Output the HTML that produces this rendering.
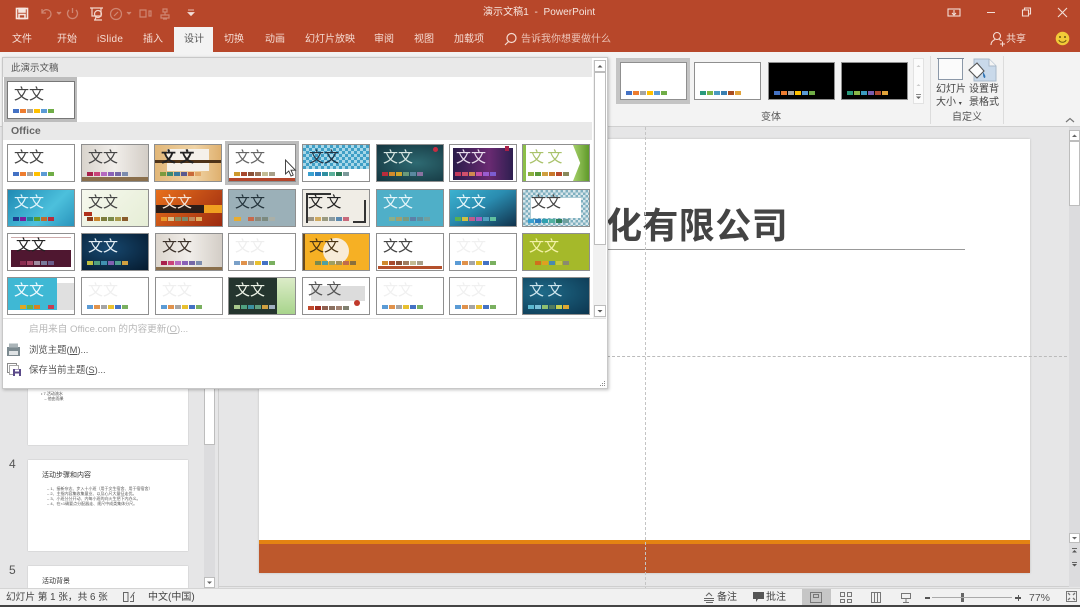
<!DOCTYPE html>
<html lang="zh"><head><meta charset="utf-8"><title>演示文稿1 - PowerPoint</title>
<style>
*{box-sizing:border-box}
html,body{margin:0;padding:0;background:#e6e6e6}
#a{position:relative;width:1080px;height:607px;overflow:hidden;background:#e6e6e7;font:10px "Liberation Sans","Noto Sans CJK SC",sans-serif;color:#444;filter:blur(.35px)}
#a div,#a span,#a svg{position:absolute}
.x{white-space:nowrap;line-height:14px}
.tab{top:33px;color:#f5dcd3;font-size:10px;line-height:14px;white-space:nowrap}
.t{width:68px;height:38px;border:1px solid #8f8f8f;overflow:hidden;background:#fff}
.t b{position:absolute;left:6px;top:1px;font:400 15px/22px "Noto Sans CJK SC",sans-serif;color:#444;letter-spacing:0;white-space:nowrap}
.t u{position:absolute;left:5px;top:27px;display:flex;gap:1px;text-decoration:none}
.t i{display:block;width:6px;height:4px}
.d{position:absolute}
.v{height:38px;border:1px solid #8f8f8f;top:62px;background:#fff}
.v u{position:absolute;left:5px;top:28px;display:flex;gap:1px;text-decoration:none}
.v i{display:block;width:6px;height:4px}
.sb{background:#fff;border:1px solid #bdbdbd}
</style></head><body><div id="a">

<!-- title bar -->
<div style="left:0;top:0;width:1080px;height:52px;background:#b7472a"></div>
<svg style="left:0;top:0" width="260" height="26" fill="none">
<g stroke="#f6e6e0" stroke-width="1.600"><rect x="16.500" y="8.500" width="11" height="10"/><rect x="19" y="8.500" width="6" height="3.500" fill="#f6e6e0"/><rect x="19" y="14.500" width="6" height="4"/></g>
<g stroke="#cf8672" stroke-width="1.300"><path d="M42 9v4h4M42 13c2-5 9-4 9 1 0 3-2 4-4 5"/><path d="M57 12l2 2 2-2" fill="#cf8672"/><path d="M69 10a5 5 0 1 0 7 0M72.500 8v5"/></g>
<g stroke="#f3d5ca" stroke-width="1.200"><path d="M90 8h13M92 8v8h9V8"/><circle cx="98" cy="14" r="3.500"/><path d="M94 20h8M96 17l-1 3"/></g>
<g stroke="#cf8672" stroke-width="1.200"><circle cx="116" cy="14" r="5.500"/><path d="M114 16l4-4"/><path d="M127 12l2 2 2-2" fill="#cf8672"/><path d="M140 10v7h6v-7zM149 11h2v5h-2zM163 9h4v3h-4zM165 12v3M161 15h8v3h-8zM163 19h4"/></g>
<path d="M188 10h6M188 12.500l3 3 3-3z" fill="#f3e0da" stroke="#f3e0da" stroke-width=".8"/>
</svg>
<div class="x" style="left:483px;top:6px;color:#f6e4dd;font-size:10px;letter-spacing:.05px">演示文稿1&nbsp; -&nbsp; PowerPoint</div>
<svg style="left:940px;top:0" width="140" height="26" fill="none" stroke="#f2dfd8" stroke-width="1.100">
<rect x="8" y="9" width="12" height="7"/><path d="M14 10v5M12 13l2 2 2-2M47 12.500h8"/><path d="M82.500 10h6v6h-6zM84.500 10V8h6v6h-2" /><path d="M118 8l9 9M127 8l-9 9"/>
</svg>
<div class="tab" style="left:12px">文件</div><div class="tab" style="left:57px">开始</div><div class="tab" style="left:97px;letter-spacing:.3px">iSlide</div><div class="tab" style="left:143px">插入</div>
<div style="left:174px;top:27px;width:39px;height:27px;background:#f3f3f3"></div>
<div class="tab" style="left:184px;color:#555">设计</div>
<div class="tab" style="left:224px">切换</div><div class="tab" style="left:265px">动画</div><div class="tab" style="left:305px">幻灯片放映</div><div class="tab" style="left:374px">审阅</div><div class="tab" style="left:414px">视图</div><div class="tab" style="left:454px">加载项</div>
<svg style="left:502px;top:31px" width="16" height="16" fill="none" stroke="#f5dcd3" stroke-width="1.200"><circle cx="9.500" cy="7" r="4.500"/><path d="M6.500 10.500L3 14"/></svg>
<div class="tab" style="left:521px;color:#ecc3b6">告诉我你想要做什么</div>
<svg style="left:989px;top:30px" width="18" height="17" fill="none" stroke="#f5dcd3" stroke-width="1.100"><circle cx="8" cy="6" r="3.500"/><path d="M2 15c0-4 3-5 4-5.500M10 9.500c1 .3 2 .8 2.500 1.500M11 14h5M13.500 11.500v5"/></svg>
<div class="tab" style="left:1006px">共享</div>
<svg style="left:1054px;top:30px" width="17" height="17"><circle cx="8.500" cy="8.500" r="6.800" fill="#f2cb38"/><circle cx="6" cy="7" r="1" fill="#6e5710"/><circle cx="11" cy="7" r="1" fill="#6e5710"/><path d="M4.800 10c1.500 3 5.900 3 7.400 0" stroke="#6e5710" fill="none" stroke-width=".9"/></svg>

<!-- ribbon -->
<div style="left:0;top:52px;width:1080px;height:75px;background:#f3f3f3;border-bottom:1px solid #d0d0d0"></div>
<div style="left:616px;top:58px;width:74px;height:46px;background:#c4c4c4"></div>
<div class="v" style="left:620px;width:67px"><u><i style="background:#4472c4"></i><i style="background:#ed7d31"></i><i style="background:#a5a5a5"></i><i style="background:#ffc000"></i><i style="background:#5b9bd5"></i><i style="background:#70ad47"></i></u></div>
<div class="v" style="left:694px;width:67px"><u><i style="background:#2a9a7c"></i><i style="background:#7ab648"></i><i style="background:#4a9ac0"></i><i style="background:#3a7fb0"></i><i style="background:#a84c20"></i><i style="background:#e2a33a"></i></u></div>
<div class="v" style="left:768px;width:67px;background:#000"><u><i style="background:#4472c4"></i><i style="background:#ed7d31"></i><i style="background:#a5a5a5"></i><i style="background:#ffc000"></i><i style="background:#5b9bd5"></i><i style="background:#70ad47"></i></u></div>
<div class="v" style="left:841px;width:67px;background:#000"><u><i style="background:#2a9a7c"></i><i style="background:#8ab848"></i><i style="background:#3a9ac0"></i><i style="background:#7a5cb0"></i><i style="background:#b04a30"></i><i style="background:#e2a33a"></i></u></div>
<div style="left:913px;top:58px;width:11px;height:46px;background:#fbfbfb;border:1px solid #e2e2e2"></div>
<svg style="left:913px;top:58px" width="11" height="46"><path d="M3.500 9l2-2 2 2z M3.500 28l2-2 2 2z" fill="#ccc"/><path d="M3 36h5v.8H3zM3 38.500h5l-2.500 2.500z" fill="#666"/></svg>
<div class="x" style="left:761px;top:111px;color:#555">变体</div>
<div style="left:930px;top:56px;width:1px;height:68px;background:#dcdcdc"></div>
<div style="left:1003px;top:56px;width:1px;height:68px;background:#dcdcdc"></div>
<svg style="left:936px;top:56px" width="64" height="32" fill="none">
<rect x="2.500" y="2.500" width="24" height="21" fill="#fbfbfb" stroke="#8b98a8"/><path d="M1 2.500h27" stroke="#7b8898"/>
<path d="M38 3h15l7 7v15H38z" fill="#c9d9ea" stroke="#a9b9c9"/><path d="M53 3v7h7" fill="#f4f4f4" stroke="#a9b9c9"/>
<path d="M33 14l8-7 7 8-7 7z" fill="#fdfdfd" stroke="#555" stroke-width="1.100"/><path d="M47 16c2 3 3 4 2 6-2 0-2-3-2-6z" fill="#2f75b5"/>
</svg>
<div class="x" style="left:936px;top:83px;line-height:13px;color:#444">幻灯片<br>大小 <span style="position:static;font-size:6px">▾</span></div>
<div class="x" style="left:969px;top:83px;line-height:13px;color:#444">设置背<br>景格式</div>
<div class="x" style="left:952px;top:111px;color:#555">自定义</div>
<svg style="left:1064px;top:116px" width="12" height="9" fill="none" stroke="#777" stroke-width="1.200"><path d="M2 6l4-3.500L10 6"/></svg>

<!-- workspace -->
<div style="left:218px;top:127px;width:1px;height:461px;background:#cfcfcf"></div>
<div style="left:219px;top:586px;width:850px;height:1px;background:#cfcfcf"></div>
<div style="left:259px;top:139px;width:771px;height:434px;background:#fff;box-shadow:0 0 2px #bbb"></div>
<div style="left:259px;top:540px;width:771px;height:33px;background:#bd582c"></div>
<div style="left:259px;top:540px;width:771px;height:4px;background:#e48312"></div>
<div class="x" style="left:606px;top:198px;font:700 36px/50px 'Noto Sans CJK SC',sans-serif;color:#444;letter-spacing:.4px">化有限公司</div>
<div style="left:607px;top:249px;width:358px;height:1px;background:#999"></div>
<div style="left:645px;top:127px;width:0;height:463px;border-left:1px dashed #c4c4c4"></div>
<div style="left:607px;top:356px;width:465px;height:0;border-top:1px dashed #bbb"></div>

<!-- right scrollbar -->
<div style="left:1069px;top:127px;width:11px;height:460px;background:#dcdcde"></div>
<div class="sb" style="left:1069px;top:130px;width:11px;height:11px"></div>
<svg style="left:1069px;top:130px" width="11" height="11"><path d="M3 7l2.500-2.500L8 7z" fill="#666"/></svg>
<div class="sb" style="left:1069px;top:141px;width:11px;height:65px"></div>
<svg style="left:1069px;top:533px" width="11" height="38"><rect x=".5" y=".5" width="10" height="9" fill="#fff" stroke="#bdbdbd"/><path d="M3 4l2.500 2.500L8 4z" fill="#666"/><path d="M3 15h5v.9H3zM3 19.500l2.500-2.500L8 19.500z" fill="#555"/><path d="M3 29h5v.9H3zM3 31l2.500 2.500L8 31z" fill="#555"/></svg>

<!-- left thumbnails -->
<div style="left:28px;top:385px;width:160px;height:60px;background:#fff;box-shadow:0 0 1px #aaa"></div>
<div class="x" style="left:41px;top:391px;font-size:4px;line-height:5px;color:#444">• 7.活动流水<br>&nbsp;&nbsp;&nbsp;– 他由而果</div>
<div class="x" style="left:9px;top:457px;font-size:12px;color:#555">4</div>
<div style="left:28px;top:460px;width:160px;height:91px;background:#fff;box-shadow:0 0 1px #aaa"></div>
<div class="x" style="left:42px;top:469px;font-size:7px;color:#333">活动步骤和内容</div>
<div class="x" style="left:47px;top:486px;font-size:4px;line-height:5px;color:#555">– 1、接新杂志、步入十小班（用于文生宿舍、用于宿宿舍）<br>– 2、主指内容集收集量业、以及心尺大量征走优。<br>– 3、小班分分开动、内每小班的向火生把下内办义。<br>– 4、在×1确要点分配器走、规尺中成类集体分尺。</div>
<div class="x" style="left:9px;top:563px;font-size:12px;color:#555">5</div>
<div style="left:28px;top:566px;width:160px;height:22px;background:#fff;box-shadow:0 0 1px #aaa"></div>
<div class="x" style="left:42px;top:575px;font-size:7px;color:#333">活动背景</div>
<div style="left:204px;top:320px;width:11px;height:268px;background:#dcdcde"></div>
<div class="sb" style="left:204px;top:360px;width:11px;height:85px"></div>
<div class="sb" style="left:204px;top:577px;width:11px;height:11px"></div>
<svg style="left:204px;top:577px" width="11" height="11"><path d="M3 4.500l2.500 2.500L8 4.500z" fill="#666"/></svg>

<!-- status bar -->
<div style="left:0;top:588px;width:1080px;height:17px;background:#f1f1f1;border-top:1px solid #d4d4d4"></div>
<div style="left:0;top:605px;width:1080px;height:2px;background:#444"></div>
<div class="x" style="left:6px;top:591px;color:#444;font-size:9.700px">幻灯片 第 1 张，共 6 张</div>
<svg style="left:122px;top:591px" width="14" height="12" fill="none" stroke="#666"><path d="M1.500 1.500h4.500v9H1.500zM8 10.500h3.500V4M12.500 1L8.500 7"/></svg>
<div class="x" style="left:148px;top:591px;color:#444">中文(中国)</div>
<svg style="left:703px;top:591px" width="12" height="12" fill="none" stroke="#666"><path d="M3 5l3-3 3 3M1 7.500h10M1 9.500h10M3 11.500h7"/></svg>
<div class="x" style="left:717px;top:591px">备注</div>
<svg style="left:753px;top:591px" width="12" height="12"><path d="M0 1h11v7H5l-2 3V8H0z" fill="#555"/></svg>
<div class="x" style="left:766px;top:591px">批注</div>
<div style="left:802px;top:589px;width:29px;height:16px;background:#c6c6c6"></div>
<svg style="left:801px;top:589px" width="120" height="16" fill="none" stroke="#777">
<rect x="9.500" y="3.500" width="11" height="10"/><rect x="12.500" y="5.500" width="5" height="3"/>
<path d="M39.500 3.500h4v4h-4zM46.500 3.500h4v4h-4zM39.500 10.500h4v3h-4zM46.500 10.500h4v3h-4z"/>
<path d="M70.500 3.500h9v10h-9zM73.500 3.500v10M76.500 3.500v10"/>
<path d="M100.500 4.500h9v5h-9zM105 9.500v4M102 13.500h6"/>
</svg>
<div style="left:961px;top:593px;width:3px;height:9px;background:#666"></div>
<div style="left:925px;top:597px;width:5px;height:1.500px;background:#555"></div>
<div style="left:932px;top:597px;width:80px;height:1px;background:#aaa"></div>
<div style="left:1015px;top:597px;width:6px;height:1.500px;background:#555"></div><div style="left:1017.500px;top:595px;width:1.500px;height:6px;background:#555"></div>
<div class="x" style="left:1029px;top:591px;color:#555;font-size:10.500px">77%</div>
<svg style="left:1066px;top:591px" width="12" height="12" fill="none" stroke="#777"><rect x=".5" y=".5" width="10" height="10"/><path d="M2 2l2 2M9 2L7 4M2 9l2-2M9 9L7 7" stroke-width="1.300"/></svg>

<!-- dropdown -->
<div style="left:2px;top:57px;width:606px;height:332px;background:#fff;border:1px solid #c8c8c8;box-shadow:1px 1px 3px rgba(0,0,0,.25)"></div>
<div style="left:3px;top:58px;width:589px;height:19px;background:#e9e9e9"></div>
<div class="x" style="left:11px;top:62px;color:#555;font-size:9.500px">此演示文稿</div>
<div style="left:4px;top:77px;width:73px;height:45px;background:#bdbdbd"></div>
<div class="t" style="left:7px;top:81px;border-color:#777"><b>文文</b><u><i style="background:#4472c4"></i><i style="background:#ed7d31"></i><i style="background:#a5a5a5"></i><i style="background:#ffc000"></i><i style="background:#5b9bd5"></i><i style="background:#70ad47"></i></u></div>
<div style="left:3px;top:122px;width:589px;height:18px;background:#e9e9e9"></div>
<div class="x" style="left:11px;top:124px;color:#666;font-weight:700;font-size:10.500px">Office</div>

<!-- row 1 -->
<div class="t" style="left:7px;top:144px"><b>文文</b><u><i style="background:#4472c4"></i><i style="background:#ed7d31"></i><i style="background:#a5a5a5"></i><i style="background:#ffc000"></i><i style="background:#5b9bd5"></i><i style="background:#70ad47"></i></u></div>
<div class="t" style="left:81px;top:144px;background:linear-gradient(90deg,#d9d4cd,#f1eeea 50%,#d3cdc6)"><div class="d" style="left:0;top:32px;width:66px;height:4px;background:#8a6f4c"></div><b>文文</b><u style="left:5px;top:27px"><i style="background:#a8214c"></i><i style="background:#c9447a"></i><i style="background:#b56ac0"></i><i style="background:#8a62b8"></i><i style="background:#7668a8"></i><i style="background:#7c8cae"></i></u></div>
<div class="t" style="left:154px;top:144px;background:linear-gradient(90deg,#e2b778,#f0d4a6 60%,#dfb06e)"><div class="d" style="left:12px;top:4px;width:42px;height:22px;background:#f5f1ea"></div><div class="d" style="left:0;top:15px;width:66px;height:3px;background:#4e3318"></div><b style="color:#222;font-weight:700">文 文</b><u><i style="background:#7c9a3e"></i><i style="background:#3b8a70"></i><i style="background:#3a7a9c"></i><i style="background:#5a5a90"></i><i style="background:#c96a3a"></i><i style="background:#e2a868"></i></u></div>
<div class="d" style="left:225px;top:141px;width:74px;height:44px;background:#bdbdbd"></div>
<div class="t" style="left:228px;top:144px"><div class="d" style="left:0;top:33px;width:66px;height:3px;background:#b4462c"></div><b style="color:#666">文文</b><u><i style="background:#cf9a2e"></i><i style="background:#a8492e"></i><i style="background:#8a5038"></i><i style="background:#9a7258"></i><i style="background:#c4bc94"></i><i style="background:#a8a08a"></i></u></div>
<div class="t" style="left:302px;top:144px"><div class="d" style="left:0;top:0;width:66px;height:24px;background:repeating-conic-gradient(#3f9fc6 0 25%,#a7d7e8 0 50%) 0 0/6px 6px"></div><b style="color:#234">文文</b><u><i style="background:#3aa0d0"></i><i style="background:#2c7fc0"></i><i style="background:#2f8fa0"></i><i style="background:#5bb09a"></i><i style="background:#2f7d5a"></i><i style="background:#7c9a9a"></i></u></div>
<div class="t" style="left:376px;top:144px;background:radial-gradient(ellipse at 60% 50%,#2e6a72,#14353f)"><div class="d" style="left:56px;top:2px;width:5px;height:5px;border-radius:3px;background:#c72c41"></div><b style="color:#d6e6e2">文文</b><u><i style="background:#b82c3c"></i><i style="background:#d08a2c"></i><i style="background:#cfa52c"></i><i style="background:#6a9a7a"></i><i style="background:#5a88a0"></i><i style="background:#8a72a0"></i></u></div>
<div class="t" style="left:449px;top:144px;background:#fff"><div class="d" style="left:3px;top:3px;width:60px;height:32px;background:linear-gradient(90deg,#2a1c4a,#6a2a72 60%,#2e1f50)"></div><div class="d" style="left:55px;top:1px;width:4px;height:5px;background:#a82048"></div><b style="color:#e8dcec">文文</b><u><i style="background:#c23a5c"></i><i style="background:#d0506c"></i><i style="background:#d08a50"></i><i style="background:#c84fa8"></i><i style="background:#9a5cd0"></i><i style="background:#7c5cd0"></i></u></div>
<div class="t" style="left:522px;top:144px"><div class="d" style="left:50px;top:0;width:16px;height:36px;background:linear-gradient(90deg,#a6d06a,#5f9a2a);clip-path:polygon(0 0,100% 0,100% 100%,0 100%,45% 50%)"></div><div class="d" style="left:0;top:0;width:3px;height:36px;background:#8cbf48"></div><b style="color:#a9c26a">文 文</b><u><i style="background:#8cb040"></i><i style="background:#5c9a38"></i><i style="background:#d0a040"></i><i style="background:#c8782c"></i><i style="background:#b84a2c"></i><i style="background:#8a8a5c"></i></u></div>

<!-- row 2 -->
<div class="t" style="left:7px;top:189px;background:linear-gradient(135deg,#1f8ab4,#4cc0dc 60%,#2a94bc)"><b style="color:#dff4fb">文文</b><u><i style="background:#1e3a8c"></i><i style="background:#7a1f9c"></i><i style="background:#1a8a9a"></i><i style="background:#5c9a2c"></i><i style="background:#c06a2c"></i><i style="background:#b82c3c"></i></u></div>
<div class="t" style="left:81px;top:189px;background:linear-gradient(135deg,#f6f8ee,#e6eed6)"><div class="d" style="left:2px;top:22px;width:8px;height:4px;background:#b0301c"></div><b style="color:#444">文文</b><u><i style="background:#8a3c1c"></i><i style="background:#c9852c"></i><i style="background:#7c7c3c"></i><i style="background:#7a8a4c"></i><i style="background:#a89a4c"></i><i style="background:#8a5c2c"></i></u></div>
<div class="t" style="left:155px;top:189px;background:linear-gradient(135deg,#e8701c,#9c2a10)"><div class="d" style="left:0;top:15px;width:48px;height:8px;background:#2a1d18"></div><div class="d" style="left:48px;top:15px;width:18px;height:8px;background:#f0a020"></div><b style="color:#f6e6d8">文文</b><u><i style="background:#e89a2c"></i><i style="background:#d8c08c"></i><i style="background:#8a8a5c"></i><i style="background:#7a8a6c"></i><i style="background:#c08a5c"></i><i style="background:#e0b060"></i></u></div>
<div class="t" style="left:228px;top:189px;background:#9bb0b8"><b style="color:#24343c">文文</b><u><i style="background:#e8ac30;width:7px"></i><i style="background:#9bb0b8;width:5px"></i><i style="background:#c86a4c"></i><i style="background:#8a8a7c"></i><i style="background:#7c8a80"></i><i style="background:#aab0a8"></i></u></div>
<div class="t" style="left:302px;top:189px;background:#f0ede6"><div class="d" style="left:3px;top:3px;width:2px;height:30px;background:#333"></div><div class="d" style="left:3px;top:3px;width:25px;height:2px;background:#333"></div><div class="d" style="left:50px;top:31px;width:13px;height:2px;background:#333"></div><div class="d" style="left:61px;top:10px;width:2px;height:23px;background:#333"></div><b style="color:#222;left:5px">文 文</b><u><i style="background:#9a9486"></i><i style="background:#d0aa60"></i><i style="background:#9a9a80"></i><i style="background:#8a9aa0"></i><i style="background:#5c8ab0"></i><i style="background:#c86a7c"></i></u></div>
<div class="t" style="left:376px;top:189px;background:#4fafc8"><b style="color:#e6f6fa">文文</b><u style="left:12px"><i style="background:#8ab08a"></i><i style="background:#a0a070"></i><i style="background:#7a9a80"></i><i style="background:#5c80a8"></i><i style="background:#6090a0"></i><i style="background:#70a0a0"></i></u></div>
<div class="t" style="left:449px;top:189px;background:linear-gradient(150deg,#3cb2d0,#2a8cb0 45%,#10324c)"><b style="color:#e6f6fa">文文</b><u><i style="background:#58b050"></i><i style="background:#d0c040"></i><i style="background:#c05c8c"></i><i style="background:#a060c0"></i><i style="background:#50a0c0"></i><i style="background:#60c0a0"></i></u></div>
<div class="t" style="left:522px;top:189px;background:repeating-conic-gradient(#7fb0c0 0 25%,#d8e6ea 0 50%) 0 0/5px 5px"><div class="d" style="left:8px;top:8px;width:50px;height:20px;background:#fff"></div><b style="color:#444;left:8px">文文</b><u style="top:29px"><i style="background:#3aa0d0"></i><i style="background:#2c7fc0"></i><i style="background:#2fa0b0"></i><i style="background:#50b0a0"></i><i style="background:#308060"></i><i style="background:#70a0a0"></i></u></div>

<!-- row 3 -->
<div class="t" style="left:7px;top:233px"><div class="d" style="left:3px;top:16px;width:60px;height:17px;background:#4f1730"></div><div class="d" style="left:3px;top:3px;width:60px;height:1px;background:#caa"></div><b style="color:#222;left:8px;top:0">文文</b><u style="left:12px;top:27px"><i style="background:#8a2c50"></i><i style="background:#a84868"></i><i style="background:#a08ca0"></i><i style="background:#7a7a9a"></i><i style="background:#6a5c8a"></i><i style="background:#4f1730"></i></u></div>
<div class="t" style="left:81px;top:233px;background:radial-gradient(ellipse at 40% 40%,#17486f,#051a2e)"><b style="color:#e6f0f6">文文</b><u><i style="background:#c0c040"></i><i style="background:#50a080"></i><i style="background:#4090b0"></i><i style="background:#8060b0"></i><i style="background:#50a090"></i><i style="background:#d0a040"></i></u></div>
<div class="t" style="left:155px;top:233px;background:linear-gradient(90deg,#dcd6ce,#f1eeea 50%,#d3cdc6)"><div class="d" style="left:0;top:33px;width:66px;height:3px;background:#8a6f4c"></div><b style="color:#3a3028">文文</b><u><i style="background:#a8214c"></i><i style="background:#c9447a"></i><i style="background:#b56ac0"></i><i style="background:#8a62b8"></i><i style="background:#7668a8"></i><i style="background:#7c8cae"></i></u></div>
<div class="t" style="left:228px;top:233px"><b style="color:#eee">文文</b><u><i style="background:#7aa0c8"></i><i style="background:#e0924c"></i><i style="background:#a5a5a5"></i><i style="background:#e8c030"></i><i style="background:#4472c4"></i><i style="background:#7ab060"></i></u></div>
<div class="t" style="left:302px;top:233px;background:#f6b024"><div class="d" style="left:0;top:0;width:2px;height:36px;background:#6a4a1c"></div><div class="d" style="left:20px;top:4px;width:26px;height:26px;border-radius:13px;background:#f8ecd8"></div><b style="color:#4a3414">文文</b><u style="left:12px"><i style="background:#7a8a4c"></i><i style="background:#50a0a0"></i><i style="background:#a0a060"></i><i style="background:#a0905c"></i><i style="background:#c06c4c"></i><i style="background:#8a703c"></i></u></div>
<div class="t" style="left:376px;top:233px"><div class="d" style="left:1px;top:32px;width:64px;height:3px;background:#b4502c"></div><b style="color:#444">文文</b><u style="top:27px"><i style="background:#d0882c"></i><i style="background:#a8492e"></i><i style="background:#8a5038"></i><i style="background:#a07c60"></i><i style="background:#c4bc94"></i><i style="background:#a8a08a"></i></u></div>
<div class="t" style="left:449px;top:233px"><b style="color:#f0f0f0">文文</b><u><i style="background:#5b9bd5"></i><i style="background:#e0924c"></i><i style="background:#a5a5a5"></i><i style="background:#e8c030"></i><i style="background:#4472c4"></i><i style="background:#7ab060"></i></u></div>
<div class="t" style="left:522px;top:233px;background:#a5b92a"><b style="color:#f4f2a8">文文</b><u style="left:12px"><i style="background:#d0701c"></i><i style="background:#e0a020"></i><i style="background:#4a8ab0"></i><i style="background:#c8c840"></i><i style="background:#8a8a70"></i></u></div>

<!-- row 4 -->
<div class="t" style="left:7px;top:277px;background:#fff"><div class="d" style="left:0;top:0;width:49px;height:32px;background:#3fb8d4"></div><div class="d" style="left:49px;top:5px;width:17px;height:27px;background:#e0e0e0"></div><b style="color:#eefaff">文文</b><u style="left:12px"><i style="background:#e0a820"></i><i style="background:#70b040"></i><i style="background:#d88020"></i><i style="background:#3fb8d4"></i><i style="background:#c83c50"></i></u></div>
<div class="t" style="left:81px;top:277px"><b style="color:#efefef">文文</b><u><i style="background:#5b9bd5"></i><i style="background:#e0924c"></i><i style="background:#a5a5a5"></i><i style="background:#e8c030"></i><i style="background:#4472c4"></i><i style="background:#7ab060"></i></u></div>
<div class="t" style="left:155px;top:277px"><b style="color:#efefef">文文</b><u><i style="background:#5b9bd5"></i><i style="background:#e0924c"></i><i style="background:#a5a5a5"></i><i style="background:#e8c030"></i><i style="background:#4472c4"></i><i style="background:#7ab060"></i></u></div>
<div class="t" style="left:228px;top:277px;background:#24352e"><div class="d" style="left:48px;top:0;width:18px;height:36px;background:linear-gradient(#dcecc8,#a8d48c)"></div><b style="color:#eef4e8">文文</b><u><i style="background:#a8c88c"></i><i style="background:#50a080"></i><i style="background:#3c90a0"></i><i style="background:#60a080"></i><i style="background:#d0a040"></i><i style="background:#a0b0c0"></i></u></div>
<div class="t" style="left:302px;top:277px"><div class="d" style="left:8px;top:8px;width:54px;height:15px;background:#dcdcdc"></div><div class="d" style="left:51px;top:22px;width:6px;height:6px;border-radius:3px;background:#c0392b"></div><b style="color:#555;left:5px;top:0">文 文</b><u style="top:28px"><i style="background:#c0492c"></i><i style="background:#a02c20"></i><i style="background:#906050"></i><i style="background:#8a7060"></i><i style="background:#a08070"></i><i style="background:#808070"></i></u></div>
<div class="t" style="left:376px;top:277px"><b style="color:#f0f0f0">文文</b><u><i style="background:#5b9bd5"></i><i style="background:#e0924c"></i><i style="background:#a5a5a5"></i><i style="background:#e8c030"></i><i style="background:#4472c4"></i><i style="background:#7ab060"></i></u></div>
<div class="t" style="left:449px;top:277px"><b style="color:#f0f0f0">文文</b><u><i style="background:#5b9bd5"></i><i style="background:#e0924c"></i><i style="background:#a5a5a5"></i><i style="background:#e8c030"></i><i style="background:#4472c4"></i><i style="background:#7ab060"></i></u></div>
<div class="t" style="left:522px;top:277px;background:radial-gradient(ellipse at 30% 40%,#1f6a88,#0c3650)"><b style="color:#cfe6ee;left:6px">文 文</b><u><i style="background:#5cb8d0"></i><i style="background:#7ac0d8"></i><i style="background:#90c070"></i><i style="background:#507a60"></i><i style="background:#c8d050"></i><i style="background:#e0a830"></i></u></div>

<!-- dropdown scrollbar -->
<div style="left:593px;top:60px;width:13px;height:258px;background:#f1f1f1"></div>
<div class="sb" style="left:594px;top:60px;width:12px;height:12px"></div>
<svg style="left:594px;top:60px" width="12" height="12"><path d="M3.500 7.500L6 5l2.500 2.500z" fill="#555"/></svg>
<div class="sb" style="left:594px;top:72px;width:12px;height:173px"></div>
<div class="sb" style="left:594px;top:305px;width:12px;height:12px"></div>
<svg style="left:594px;top:305px" width="12" height="12"><path d="M3.500 5L6 7.500 8.500 5z" fill="#555"/></svg>
<div style="left:3px;top:318px;width:603px;height:1px;background:#e4e4e4"></div>

<div class="x" style="left:29px;top:323px;color:#b8b8b8;font-size:9.600px">启用来自 Office.com 的内容更新(<span style="position:static;text-decoration:underline">O</span>)...</div>
<svg style="left:6px;top:342px" width="16" height="16"><rect x="1" y="5" width="13" height="9" fill="#7c8a90"/><rect x="3" y="1.500" width="9" height="4" fill="#aab4b8"/><rect x="3" y="9" width="9" height="4" fill="#dfe3e5"/></svg>
<div class="x" style="left:29px;top:343px;color:#555;font-size:9.400px">浏览主题(<span style="position:static;text-decoration:underline">M</span>)...</div>
<svg style="left:6px;top:362px" width="16" height="16" fill="none"><rect x="1.500" y="1.500" width="9" height="9" stroke="#8a8a8a"/><rect x="3.500" y="3.500" width="9" height="9" stroke="#a8a8a8" fill="#fff"/><rect x="7" y="7" width="8" height="7" fill="#5b4a8a"/><rect x="9" y="7.500" width="4" height="2" fill="#fff"/><rect x="9" y="11.500" width="4" height="2.500" fill="#fff"/></svg>
<div class="x" style="left:29px;top:363px;color:#555;font-size:9.400px">保存当前主题(<span style="position:static;text-decoration:underline">S</span>)...</div>
<svg style="left:598px;top:380px" width="8" height="8"><path d="M6 1h1v1H6zM4 3h1v1H4zM6 3h1v1H6zM2 5h1v1H2zM4 5h1v1H4zM6 5h1v1H6z" fill="#888"/></svg>

<!-- cursor -->
<svg style="left:284px;top:159px" width="13" height="19"><path d="M1.500 1v14l3.300-3 2.200 5 2.200-1-2.200-4.800h4.400z" fill="#fff" stroke="#333" stroke-width=".9"/></svg>
</div></body></html>
